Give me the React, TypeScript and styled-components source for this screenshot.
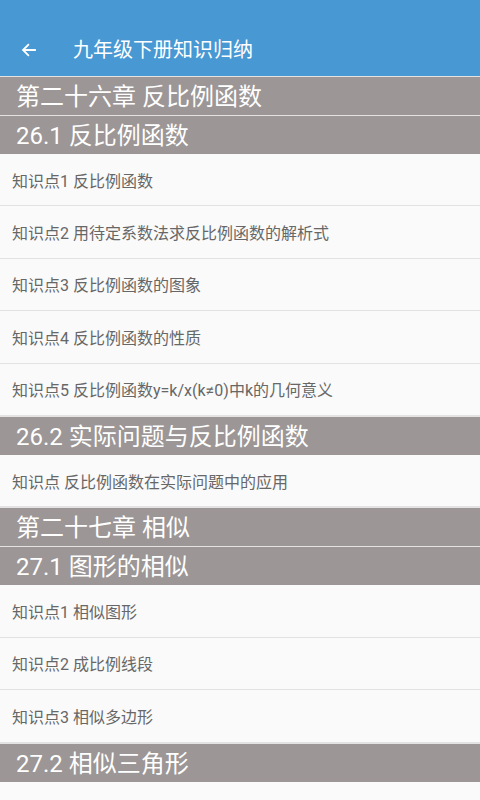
import React from "react";
import styled, { createGlobalStyle } from "styled-components";

const GlobalStyle = createGlobalStyle`
  html, body {
    margin: 0;
    padding: 0;
    background: #fafafa;
    font-family: Roboto, "Noto Sans CJK SC", sans-serif;
  }
  * { box-sizing: border-box; }
`;

type Row =
  | { kind: "chapter"; text: string }
  | { kind: "section"; text: string }
  | { kind: "item"; text: string };

const rows: Row[] = [
  { kind: "chapter", text: "第二十六章 反比例函数" },
  { kind: "section", text: "26.1 反比例函数" },
  { kind: "item", text: "知识点1 反比例函数" },
  { kind: "item", text: "知识点2 用待定系数法求反比例函数的解析式" },
  { kind: "item", text: "知识点3 反比例函数的图象" },
  { kind: "item", text: "知识点4 反比例函数的性质" },
  { kind: "item", text: "知识点5 反比例函数y=k/x(k≠0)中k的几何意义" },
  { kind: "section", text: "26.2 实际问题与反比例函数" },
  { kind: "item", text: "知识点 反比例函数在实际问题中的应用" },
  { kind: "chapter", text: "第二十七章 相似" },
  { kind: "section", text: "27.1 图形的相似" },
  { kind: "item", text: "知识点1 相似图形" },
  { kind: "item", text: "知识点2 成比例线段" },
  { kind: "item", text: "知识点3 相似多边形" },
  { kind: "section", text: "27.2 相似三角形" },
  { kind: "item", text: "知识点1 相似三角形" },
  { kind: "item", text: "知识点2 相似三角形的判定" },
];

const Page = styled.div`
  width: 480px;
  height: 800px;
  overflow: hidden;
  background: #fafafa;
`;

const AppBar = styled.header`
  height: 76px;
  background: #4798d3;
  display: flex;
  align-items: flex-end;
  padding: 0 0 12px 18px;
`;

const BackButton = styled.button`
  width: 22px;
  height: 22px;
  padding: 0;
  border: none;
  background: none;
  display: flex;
  align-items: center;
  justify-content: center;
  margin-right: 33px;
  margin-bottom: 3px;
`;

const Title = styled.h1`
  margin: 0;
  color: #fff;
  font-size: 20px;
  font-weight: 400;
  line-height: 28px;
`;

const HeadRow = styled.div`
  height: 39px;
  border-top: 1px solid #e4e2e2;
  background: #9c9696;
  color: #fff;
  font-size: 24px;
  line-height: 36px;
  padding: 2px 0 0 16px;
  white-space: nowrap;
`;

const ItemRow = styled.div`
  height: 52.4px;
  border-bottom: 1px solid #e2e2e2;
  background: #fafafa;
  color: #676767;
  font-size: 16px;
  display: flex;
  align-items: center;
  padding-left: 12px;
  white-space: nowrap;
`;

const ArrowIcon = () => (
  <svg width="18" height="18" viewBox="0 0 24 24" fill="none">
    <path
      d="M20 12H5M11 5l-7 7 7 7"
      stroke="#fff"
      strokeWidth="2.4"
      strokeLinecap="square"
    />
  </svg>
);

export default function App() {
  return (
    <Page>
      <GlobalStyle />
      <AppBar>
        <BackButton aria-label="返回">
          <ArrowIcon />
        </BackButton>
        <Title>九年级下册知识归纳</Title>
      </AppBar>
      {rows.map((r, i) =>
        r.kind === "item" ? (
          <ItemRow key={i}>{r.text}</ItemRow>
        ) : (
          <HeadRow key={i}>{r.text}</HeadRow>
        )
      )}
    </Page>
  );
}
